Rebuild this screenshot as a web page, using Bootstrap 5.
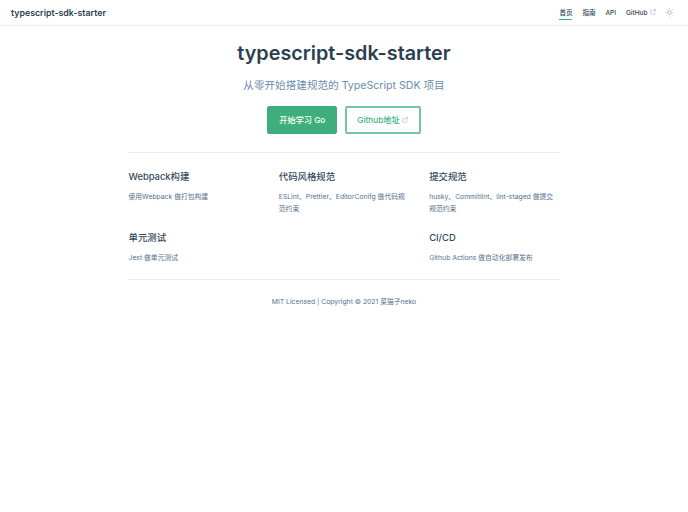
<!DOCTYPE html>
<html lang="zh-CN">
<head>
<meta charset="utf-8">
<title>typescript-sdk-starter</title>
<link href="https://cdn.jsdelivr.net/npm/bootstrap@5.3.0/dist/css/bootstrap.min.css" rel="stylesheet">
<script src="https://cdn.jsdelivr.net/npm/bootstrap@5.3.0/dist/js/bootstrap.bundle.min.js"></script>
<style>
body{font-family:Inter,"Noto Sans CJK SC",sans-serif;color:#2c3e50;background:#fff}
.topbar{height:26px;border-bottom:1px solid #eaecef;padding:0 14px 0 11px}
.brand-name{font-size:8.8px;font-weight:600;color:#2c3e50;text-decoration:none}
.nav-items{gap:10px;font-size:6.5px;font-weight:500}
.nav-items a{color:#2c3e50;text-decoration:none;line-height:14px;display:block}
.nav-items a.on{border-bottom:1px solid #3eaf7c;line-height:12px;margin-top:1px}
.nav-items .sun{margin-left:-1px}
.ext{width:6px;height:6px;margin-left:2.5px;vertical-align:-.5px;color:#aaa}
.sun{width:9px;height:9px;color:#8a97a3}
.wrap-main{width:431px;margin:0 auto}
.hero-title{font-size:19.8px;font-weight:600;line-height:22px;margin:16px 0 0;color:#2c3e50}
.hero-sub{font-size:10.6px;font-weight:400;line-height:12.5px;color:#6a8bad;margin:16px 0 0}
.hero-btns{gap:7.5px;margin-top:13.5px;padding-bottom:18px}
.cta{font-size:8.2px;font-weight:500;height:28px;display:flex;align-items:center;justify-content:center;border-radius:2px;text-decoration:none;border:1px solid #3eaf7c}
.cta-solid{width:70px;background:#3eaf7c;color:#fff}
.cta-line{width:76px;background:#fff;color:#3eaf7c;border:2px solid #74c6a2}
.rule{border-top:1px solid #eaecef;opacity:1;margin:0}
.feat-row{--bs-gutter-x:20px;--bs-gutter-y:0;padding-top:17px}
.feat-name{font-size:9.4px;font-weight:500;line-height:14px;color:#34495e;margin:0}
.feat-text{font-size:6.8px;line-height:12px;color:#55708c;margin:7px 0 0}
.feat-cell{margin-bottom:16px}
.feat-row>.feat-cell:nth-child(n+4){margin-bottom:15px}
.legal{font-size:6.8px;line-height:12px;color:#55708c;margin-top:16px}
</style>
</head>
<body>
<header class="topbar d-flex align-items-center justify-content-between">
  <a class="brand-name" href="#">typescript-sdk-starter</a>
  <nav class="nav-items d-flex align-items-center">
    <a class="on" href="#">首页</a>
    <a href="#">指南</a>
    <a href="#">API</a>
    <a href="#">GitHub<svg class="ext" viewBox="0 0 12 12" fill="none" stroke="currentColor" stroke-width="1"><path d="M9.5 7v3.5h-8v-8H5M7 1h4v4M11 1L5.5 6.5"/></svg></a>
    <svg class="sun" viewBox="0 0 18 18" fill="none" stroke="currentColor" stroke-width="1.2"><circle cx="9" cy="9" r="3.6"/><path d="M9 .8v2M9 15.2v2M.8 9h2M15.2 9h2M3.2 3.2l1.4 1.4M13.4 13.4l1.4 1.4M3.2 14.8l1.4-1.4M13.4 4.6l1.4-1.4"/></svg>
  </nav>
</header>
<main class="wrap-main">
  <section class="text-center">
    <h1 class="hero-title">typescript-sdk-starter</h1>
    <p class="hero-sub">从零开始搭建规范的 TypeScript SDK 项目</p>
    <div class="hero-btns d-flex justify-content-center">
      <a class="cta cta-solid" href="#">开始学习 Go</a>
      <a class="cta cta-line" href="#">Github地址<svg class="ext" viewBox="0 0 12 12" fill="none" stroke="currentColor" stroke-width="1"><path d="M9.5 7v3.5h-8v-8H5M7 1h4v4M11 1L5.5 6.5"/></svg></a>
    </div>
  </section>
  <hr class="rule">
  <section class="row feat-row">
    <div class="col-4 feat-cell"><h2 class="feat-name">Webpack构建</h2><p class="feat-text">使用Webpack 做打包构建</p></div>
    <div class="col-4 feat-cell"><h2 class="feat-name">代码风格规范</h2><p class="feat-text">ESLint、Prettier、EditorConifg 做代码规范约束</p></div>
    <div class="col-4 feat-cell"><h2 class="feat-name">提交规范</h2><p class="feat-text">husky、Commitlint、lint-staged 做提交规范约束</p></div>
    <div class="col-4 feat-cell"><h2 class="feat-name">单元测试</h2><p class="feat-text">Jest 做单元测试</p></div>
    <div class="col-4 feat-cell"></div>
    <div class="col-4 feat-cell"><h2 class="feat-name">CI/CD</h2><p class="feat-text">Github Actions 做自动化部署发布</p></div>
  </section>
  <hr class="rule">
  <footer class="legal text-center">MIT Licensed | Copyright © 2021 菜猫子neko</footer>
</main>
</body>
</html>
